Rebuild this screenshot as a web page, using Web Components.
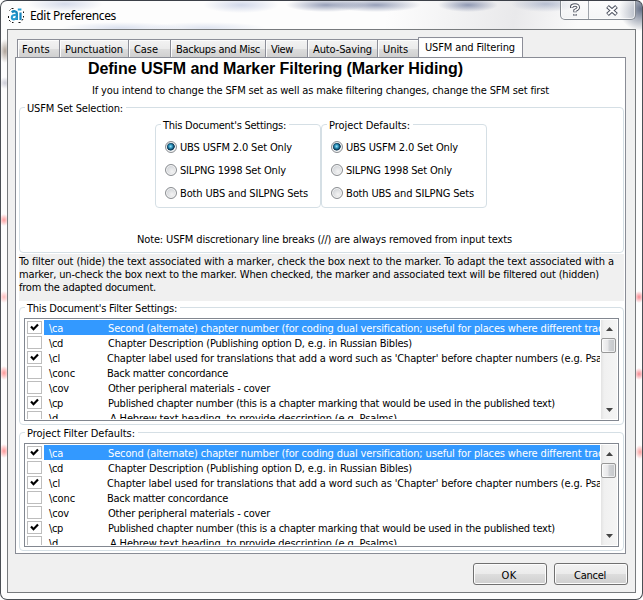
<!DOCTYPE html>
<html lang="en">
<head>
<meta charset="utf-8">
<title>Edit Preferences</title>
<style>
html,body{margin:0;background:#fff}
body{width:643px;height:600px;overflow:hidden;font:11px/13px "DejaVu Sans Condensed","DejaVu Sans",sans-serif;font-stretch:condensed;color:#000}
</style>
</head>
<body>
<pref-window></pref-window>
<script>
const define = (name, html, init) => customElements.define(name, class extends HTMLElement {
  connectedCallback() {
    if (this.shadowRoot) return;
    this.attachShadow({mode: 'open'}).innerHTML = typeof html === 'function' ? html(this) : html;
    if (init) init(this);
  }
});

/* Single line of text, tracked so that it spans the width given in "w". */
define('fit-text', '<style>:host{display:block;white-space:pre;flex:none}span{display:inline-block}</style><span><slot></slot></span>', el => {
  const w = +el.getAttribute('w');
  const fit = () => {
    el.style.letterSpacing = '0px';
    const nodes = el.shadowRoot.querySelector('slot').assignedNodes({flatten: true});
    const n = nodes.map(x => x.textContent).join('').length;
    const natural = el.shadowRoot.querySelector('span').getBoundingClientRect().width;
    if (w && n && natural) el.style.letterSpacing = ((w - natural) / n) + 'px';
  };
  if (w) el.style.width = w + 'px';
  fit();
  queueMicrotask(fit);
});

define('app-icon', `<style>:host{display:block;width:16px;height:16px}svg{display:block}</style>
<svg width="16" height="16" viewBox="0 0 16 16" fill="none">
<circle cx="8" cy="8" r="7.5" fill="#fff" fill-opacity=".85"/>
<path d="M3.500 1.500h2M1.500 3.500l1-1M.5 11v-2M1 13l1.500 1.500M4 15.500h1.500M10.500 15.500h2M14 13.500l1-1.500M15.500 10.500v-1.500M15.500 6V4.500" stroke="#111" stroke-width="1"/>
<path d="M3.800 5.400C5.500 3.600 8.800 4 8.800 6.500V13" stroke="#1688bd" stroke-width="2.300"/>
<path d="M8.500 7.700C5.500 7.700 3.600 8.500 3.800 10.600C4 13 7.500 12.900 8.800 10.500" stroke="#289bd0" stroke-width="2.100"/>
<path d="M12.500 5.500V13" stroke="#1784bc" stroke-width="2.200"/><path d="M9.800 2.500h3.600" stroke="#27a0d5" stroke-width="2"/></svg>`);

define('caption-buttons', `<style>
:host{display:flex;box-sizing:border-box;width:76px;height:20px;border:1px solid #858b93;border-top:0;border-radius:0 0 5px 5px;background:linear-gradient(#fff8,#e9ecf055);box-shadow:inset 0 0 0 1px #fffa}
div{display:flex;align-items:center;justify-content:center;padding-top:1px}
.h{width:27px;border-right:1px solid #a0a5ac}.c{flex:1;padding-right:1px}svg{display:block}</style>
<div class="h"><svg width="12" height="14" viewBox="0 0 12 14"><path d="M2.700 5V3.500Q3 2 6 2T9.300 4.500Q9.300 6 6 7.500V9.200M6 11v1.800" fill="none" stroke="#4e5361" stroke-width="3.400"/><path d="M2.700 4.500Q2.700 2 6 2T9.300 4.500Q9.300 6 6 7.500V8.700M6 11.200v1.200" fill="none" stroke="#fff" stroke-width="1.500"/></svg></div>
<div class="c"><svg width="12" height="11" viewBox="0 0 12 11"><path d="M1.500 1.500L10.500 9.500M10.500 1.500L1.500 9.500" stroke="#4e5361" stroke-width="4"/><path d="M2 2L10 9M10 2L2 9" stroke="#fff" stroke-width="1.900"/></svg></div>`);

define('title-bar', `<style>
:host{display:flex;height:28px;padding:0 7px 0 7px;font:12px/18px "Noto Sans","Open Sans",sans-serif;font-stretch:normal}
app-icon{margin:6px 6px 0 0}fit-text{margin-top:6px}caption-buttons{margin:-1px -1px 0 auto}</style>
<app-icon></app-icon><fit-text w="86"><slot></slot></fit-text><caption-buttons></caption-buttons>`);

define('tab-item', el => `<style>
:host{display:block;box-sizing:border-box;height:18px;border:1px solid #8c8e98;border-bottom:0;border-left-width:1px;border-right-width:0;background:linear-gradient(#f3f3f3,#ebebeb 50%,#dddddd 51%,#d0d0d0);box-shadow:inset 1px 1px #fcfcfc;padding:3px 0 0 5px}
:host([selected]){height:21px;margin-bottom:-1px;background:#fff;border-right-width:1px;padding:3px 0 0 6px}
</style><fit-text w="${el.getAttribute('w')}"><slot></slot></fit-text>`);

define('group-box', el => `<style>
:host{display:block;box-sizing:border-box;border:1px solid #d5dfe5;border-radius:4px}
.l{display:flex;margin:-6px 0 0 5px;height:13px}
fit-text{background:#fff;padding:0 3px 0 2px}</style>
<div class="l"><fit-text w="${el.getAttribute('w')}">${el.getAttribute('label')}</fit-text></div><slot></slot>`);

define('radio-option', el => `<style>
:host{display:flex;height:13px;margin-bottom:10px}
i{box-sizing:border-box;width:12px;height:12px;margin-right:3px;border:1px solid #8b8e92;border-radius:50%;background:radial-gradient(circle at 60% 65%,#f4f4f4,#cfd2d6 75%);box-shadow:inset 0 0 0 1px #f6f6f6}
:host([checked]) i{background:radial-gradient(circle at 46% 44%,#9fe3f8 0,#2b94bd 1.800px,#0d3a57 3.400px,#15405c 3.900px,#e7ebee 4.400px)}
</style><i></i><fit-text w="${el.getAttribute('w')}"><slot></slot></fit-text>`);

define('scroll-bar', `<style>
:host{display:flex;flex-direction:column;align-items:center;box-sizing:border-box;width:16px;background:linear-gradient(90deg,#e3e3e3,#f0f0f0 20%,#f5f5f5)}
i{box-sizing:border-box;width:15px;height:15px;margin-right:1px;border:1px solid #979797;border-radius:2px;background:linear-gradient(90deg,#f5f5f5,#e6e6e8 48%,#d1d3d6 52%,#c5c7ca);box-shadow:inset 0 0 0 1px #fff9}
svg{display:block;margin:7px 0 7px}svg.d{margin:auto 0 7px}</style>
<svg width="7" height="4"><path d="M0 4L3.500 0L7 4z" fill="#444"/></svg><i></i><svg class="d" width="7" height="4"><path d="M0 0h7L3.500 4z" fill="#444"/></svg>`);

define('marker-row', el => `<style>
:host{display:flex;height:15px}
b{box-sizing:border-box;width:15px;height:13px;margin:1px 2px 0 1px;border:1px solid #bdbdbd;display:flex;justify-content:center;background:#fff;flex:none}
svg{display:none;margin-top:1px}:host([checked]) svg{display:block}
div{flex:1;display:flex;padding:2px 0 0 5px;height:13px;min-width:0;overflow:hidden}
:host([selected]) div{background:#3399ff;color:#fff}
.m{width:${(el.getAttribute('x') || 108) - 49}px;flex:none}
</style><b><svg width="9" height="9" viewBox="0 0 9 9"><path d="M1 3.500L3.500 6.200L8 1.500" fill="none" stroke="#000" stroke-width="2.200"/></svg></b>
<div><span class="m"><fit-text w="${el.getAttribute('mw')}">${el.getAttribute('marker')}</fit-text></span><fit-text w="${el.getAttribute('w')}"><slot></slot></fit-text></div>`);

define('marker-list', `<style>
:host{display:flex;box-sizing:border-box;border:1px solid #828790;margin:3px 4px 0;padding:1px;background:#fff;overflow:hidden}
section{width:574px;margin-right:1px;overflow:hidden}scroll-bar{margin:0}</style>
<section>
<marker-row checked selected marker="\\ca" mw="14" w="496">Second (alternate) chapter number (for coding dual versification; useful for places where different trad</marker-row>
<marker-row marker="\\cd" mw="14" w="304">Chapter Description (Publishing option D, e.g. in Russian Bibles)</marker-row>
<marker-row checked marker="\\cl" mw="11" w="495" x="107">Chapter label used for translations that add a word such as 'Chapter' before chapter numbers (e.g. Psa</marker-row>
<marker-row marker="\\conc" mw="26" w="121" x="107">Back matter concordance</marker-row>
<marker-row marker="\\cov" mw="20" w="162">Other peripheral materials - cover</marker-row>
<marker-row checked marker="\\cp" mw="14" w="447">Published chapter number (this is a chapter marking that would be used in the published text)</marker-row>
<marker-row marker="\\d" mw="9" w="287" x="110">A Hebrew text heading, to provide description (e.g. Psalms)</marker-row>
</section><scroll-bar></scroll-bar>`);

define('push-button', el => `<style>
:host{display:flex;justify-content:center;align-items:center;box-sizing:border-box;width:74px;height:22px;padding:2px 2px 0 0;border:1px solid #707070;border-radius:3px;background:linear-gradient(#f2f2f2,#ebebeb 49%,#dddddd 50%,#cfcfcf);box-shadow:inset 0 0 0 1px #fcfcfc}
</style><fit-text w="${el.getAttribute('w')}"><slot></slot></fit-text>`);

define('pref-window', `<style>
:host{display:block;box-sizing:border-box;width:643px;height:600px;overflow:hidden;border:1px solid #4b4f55;border-top-color:#3c4048;border-radius:7px;
background:
radial-gradient(ellipse 5px 6px at 3px 219px,#ff8a8ad0,#fff0),radial-gradient(ellipse 5px 6px at 3px 296px,#ffa0a0b0,#fff0),radial-gradient(ellipse 5px 7px at 3px 372px,#ff8080d0,#fff0),radial-gradient(ellipse 5px 7px at 3px 450px,#ff8080d0,#fff0),
radial-gradient(ellipse 5px 6px at 638px 296px,#f76e78d0,#fff0),radial-gradient(ellipse 5px 6px at 638px 373px,#f76e78d0,#fff0),radial-gradient(ellipse 5px 7px at 639px 451px,#f98080c0,#fff0),
radial-gradient(ellipse 6px 12px at 4px 50px,#8b7a6cb0,#fff0),radial-gradient(ellipse 6px 6px at 4px 82px,#a9a9bb90,#fff0),
radial-gradient(ellipse 38px 8px at 64px 3px,#9eacd06b,#fff0),radial-gradient(ellipse 38px 8px at 240px 4px,#98a8d070,#fff0),
radial-gradient(ellipse 40px 7px at 325px 4px,#5a6890a0,#fff0),radial-gradient(ellipse 45px 7px at 375px 4px,#5a6890a0,#fff0),radial-gradient(ellipse 30px 7px at 467px 4px,#56658ea0,#fff0),radial-gradient(ellipse 35px 8px at 545px 3px,#7d8cb080,#fff0),
radial-gradient(ellipse 22px 22px at 640px 8px,#45536fd0,#fff0),
radial-gradient(ellipse 60px 6px at 120px 27px,#b9c5e080,#fff0),radial-gradient(ellipse 60px 6px at 205px 27px,#b9c5e070,#fff0),
linear-gradient(100deg,#fff0 60%,#e9e9eb 80%,#fafafa 90%) top/100% 28px no-repeat,#fdfdfd}
main{display:flex;flex-direction:column;box-sizing:border-box;margin:0 6px;width:629px;height:564px;border:1px solid #777a7d;background:#f0f0f0;padding:7px}
nav{display:flex;align-items:flex-end;height:20px;padding-left:2px}
article{display:flex;flex-direction:column;box-sizing:border-box;height:498px;width:611px;border:1px solid #898c95;background:#fff;padding:0 1px 0 3px}
h1{margin:1px 0 0 69px;font:bold 16px/19px "Liberation Sans",Arial,sans-serif;font-stretch:normal}
.sub{margin:6px 0 0 73px}
.set{height:146px;margin-top:10px;flex:none}
.pair{display:flex;gap:0;padding:9px 0 0 135px}.pair group-box{height:84px;width:166px}
.r{padding:9px 0 0 9px;height:67px;box-sizing:border-box}
.note{margin:25px 0 0 117px}
.help{background:#f0f0f0;height:47px;margin-top:1px;padding-top:1px;box-sizing:border-box;flex:none}
.f1{height:118px;margin-top:6px;flex:none}.f1 marker-list{height:103px}
.f2{height:119px;margin-top:7px;flex:none}.f2 marker-list{height:104px}
footer{display:flex;gap:7px;justify-content:flex-end;padding:9px 0 0}
</style>
<title-bar>Edit Preferences</title-bar>
<main>
<nav>
<tab-item w="28" style="width:42px;padding-left:4px">Fonts</tab-item><tab-item w="58" style="width:69px">Punctuation</tab-item><tab-item w="24" style="width:42px">Case</tab-item><tab-item w="84" style="width:95px">Backups and Misc</tab-item><tab-item w="22" style="width:42px">View</tab-item><tab-item w="59" style="width:70px">Auto-Saving</tab-item><tab-item w="25" style="width:41px">Units</tab-item><tab-item w="90" selected style="width:105px">USFM and Filtering</tab-item>
</nav>
<article>
<h1><fit-text w="375">Define USFM and Marker Filtering (Marker Hiding)</fit-text></h1>
<fit-text class="sub" w="457">If you intend to change the SFM set as well as make filtering changes, change the SFM set first</fit-text>
<group-box class="set" label="USFM Set Selection:" w="96">
<div class="pair">
<group-box label="This Document's Settings:" w="123"><div class="r"><radio-option checked w="112">UBS USFM 2.0 Set Only</radio-option><radio-option w="106">SILPNG 1998 Set Only</radio-option><radio-option w="128">Both UBS and SILPNG Sets</radio-option></div></group-box>
<group-box label="Project Defaults:" w="81"><div class="r"><radio-option checked w="112">UBS USFM 2.0 Set Only</radio-option><radio-option w="106">SILPNG 1998 Set Only</radio-option><radio-option w="128">Both UBS and SILPNG Sets</radio-option></div></group-box>
</div>
<fit-text class="note" w="375">Note: USFM discretionary line breaks (//) are always removed from input texts</fit-text>
</group-box>
<div class="help"><fit-text w="595">To filter out (hide) the text associated with a marker, check the box next to the marker. To adapt the text associated with a</fit-text><fit-text w="580">marker, un-check the box next to the marker. When checked, the marker and associated text will be filtered out (hidden)</fit-text><fit-text w="137">from the adapted document.</fit-text></div>
<group-box class="f1" label="This Document's Filter Settings:" w="150"><marker-list></marker-list></group-box>
<group-box class="f2" label="Project Filter Defaults:" w="108"><marker-list></marker-list></group-box>
</article>
<footer><push-button w="15">OK</push-button><push-button w="32">Cancel</push-button></footer>
</main>`);
</script>
</body>
</html>
